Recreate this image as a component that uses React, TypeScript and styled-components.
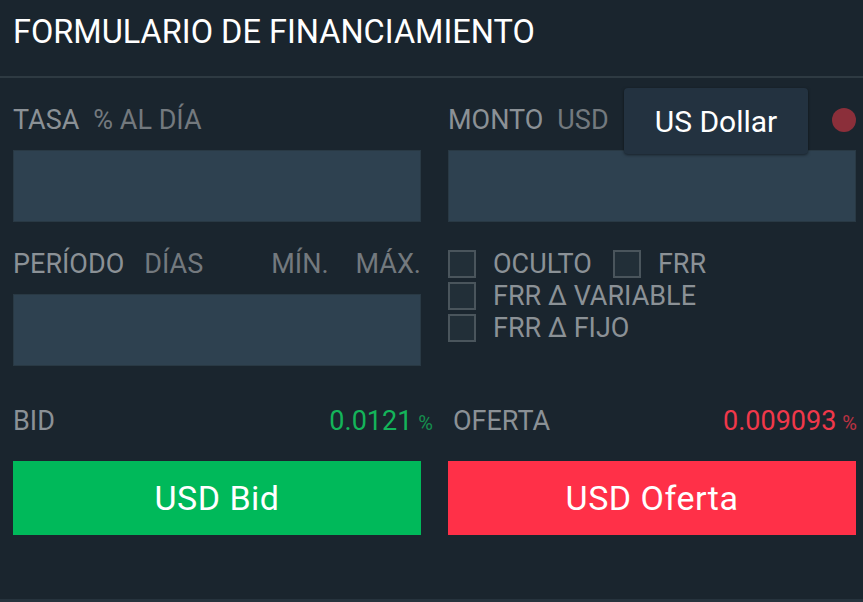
import React from "react";
import styled, { createGlobalStyle } from "styled-components";

const GlobalStyle = createGlobalStyle`
	html, body {
		margin: 0;
		padding: 0;
		background: #1a252e;
	}
	body {
		font-family: Roboto, "Liberation Sans", sans-serif;
		color: #fff;
	}
`;

const Panel = styled.div`
	width: 863px;
	height: 602px;
	background: #1a252e;
	border-bottom: 3px solid #26333d;
	box-sizing: border-box;
	overflow: hidden;
`;

const Header = styled.header`
	height: 78px;
	display: flex;
	align-items: center;
	padding: 0 13px 12px;
	box-sizing: border-box;
	border-bottom: 2px solid #2e3a42;
`;

const Title = styled.h1`
	margin: 0;
	font-size: 32.5px;
	font-weight: 400;
	color: #fff;
`;

const Body = styled.div`
	display: grid;
	grid-template-columns: 408px 408px;
	column-gap: 27px;
	padding: 0 7px 0 13px;
`;

const Field = styled.div`
	display: flex;
	flex-direction: column;
`;

const LabelRow = styled.div`
	position: relative;
	height: 72px;
	padding-top: 12px;
	box-sizing: border-box;
	display: flex;
	align-items: center;
	font-size: 27px;
	color: #8b9196;
	gap: 14px;
`;

const Unit = styled.span<{ $push?: boolean; $gap?: number }>`
	color: #73797e;
	margin-right: ${(p) => (p.$push ? "auto" : "0")};
	margin-left: ${(p) => (p.$gap ? `${p.$gap}px` : "0")};
`;

const Input = styled.div`
	height: 72px;
	background: #2e4150;
	border: 1px solid #293944;
	box-sizing: border-box;
`;

const Tip = styled.div`
	position: absolute;
	left: 176px;
	top: 10px;
	width: 184px;
	height: 66px;
	border-radius: 4px;
	background: #233240;
	box-shadow: 0 1px 3px rgba(0, 0, 0, 0.5);
	display: flex;
	align-items: center;
	justify-content: center;
	color: #fff;
	font-size: 30px;
	z-index: 2;
`;

const Dot = styled.span`
	margin-left: auto;
	width: 24px;
	height: 24px;
	border-radius: 50%;
	background: #8b2f3a;
`;

const Checks = styled.div`
	padding-top: 28px;
	display: flex;
	flex-direction: column;
	gap: 4px;
`;

const CheckRow = styled.div`
	display: flex;
	align-items: center;
	gap: 21px;
	height: 28px;
`;

const Check = styled.label`
	display: flex;
	align-items: center;
	gap: 17px;
	font-size: 27px;
	color: #8b9196;
`;

const Box = styled.span`
	width: 28px;
	height: 28px;
	box-sizing: border-box;
	border: 2px solid #4a555c;
	background: #222f38;
`;

const QuoteRow = styled.div<{ $lead?: number; $trail?: number }>`
	height: 70px;
	margin: 20px ${(p) => -(p.$trail ?? 0)}px 5px 0;
	padding-left: ${(p) => p.$lead ?? 0}px;
	display: flex;
	align-items: center;
	justify-content: space-between;
	font-size: 27px;
	color: #8b9196;
`;

const Rate = styled.span<{ $tone: string }>`
	color: ${(p) => p.$tone};
	font-size: 27px;
	small {
		font-size: 20px;
		margin-left: 6px;
		opacity: 0.75;
	}
`;

const Action = styled.button<{ $bg: string }>`
	height: 74px;
	width: 100%;
	border: none;
	background: ${(p) => p.$bg};
	color: #fff;
	font-family: inherit;
	font-size: 34px;
	letter-spacing: 0.5px;
	cursor: pointer;
`;

export default function App() {
	return (
		<>
			<GlobalStyle />
			<Panel>
				<Header>
					<Title>FORMULARIO DE FINANCIAMIENTO</Title>
				</Header>
				<Body>
					<Field>
						<LabelRow>
							TASA<Unit>% AL DÍA</Unit>
						</LabelRow>
						<Input />
					</Field>
					<Field>
						<LabelRow>
							MONTO<Unit>USD</Unit>
							<Tip>US Dollar</Tip>
							<Dot />
						</LabelRow>
						<Input />
					</Field>
					<Field>
						<LabelRow>
							PERÍODO<Unit $push $gap={6}>DÍAS</Unit>
							<Unit>MÍN.</Unit>
							<Unit $gap={13}>MÁX.</Unit>
						</LabelRow>
						<Input />
					</Field>
					<Checks>
						<CheckRow>
							<Check><Box />OCULTO</Check>
							<Check><Box />FRR</Check>
						</CheckRow>
						<CheckRow>
							<Check><Box />FRR Δ VARIABLE</Check>
						</CheckRow>
						<CheckRow>
							<Check><Box />FRR Δ FIJO</Check>
						</CheckRow>
					</Checks>
					<Field>
						<QuoteRow $trail={12}>
							BID
							<Rate $tone="#14b45a">0.0121<small>%</small></Rate>
						</QuoteRow>
						<Action $bg="#00b95a">USD Bid</Action>
					</Field>
					<Field>
						<QuoteRow $lead={5} $trail={1}>
							OFERTA
							<Rate $tone="#f0384a">0.009093<small>%</small></Rate>
						</QuoteRow>
						<Action $bg="#ff3048">USD Oferta</Action>
					</Field>
				</Body>
			</Panel>
		</>
	);
}
